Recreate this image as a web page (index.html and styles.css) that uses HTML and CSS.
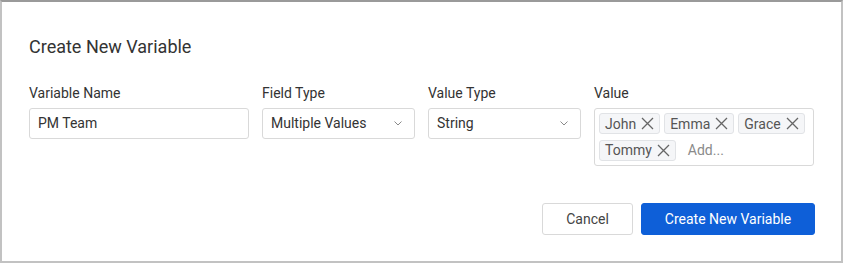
FILE: index.html
```html
<!DOCTYPE html>
<html lang="en">
<head>
    <meta charset="UTF-8">
    <meta name="viewport" content="width=device-width, initial-scale=1.0">
    <title>Create New Variable</title>
    <link rel="stylesheet" href="styles.css">
</head>
<body>
    <div class="dialog">
        <h2 class="dialog-title">Create New Variable</h2>

        <div class="fields">
            <!-- Variable name -->
            <div class="field field-wide">
                <label class="field-label">Variable Name</label>
                <div class="input">PM Team</div>
            </div>

            <!-- Field type -->
            <div class="field field-narrow">
                <label class="field-label">Field Type</label>
                <div class="input select">
                    <span>Multiple Values</span>
                    <svg class="chevron" width="8" height="5" viewBox="0 0 8 5"><path d="M0.5 0.5 L4 4 L7.5 0.5" fill="none" stroke="#8a8a8a" stroke-width="1"/></svg>
                </div>
            </div>

            <!-- Value type -->
            <div class="field field-narrow">
                <label class="field-label">Value Type</label>
                <div class="input select">
                    <span>String</span>
                    <svg class="chevron" width="8" height="5" viewBox="0 0 8 5"><path d="M0.5 0.5 L4 4 L7.5 0.5" fill="none" stroke="#8a8a8a" stroke-width="1"/></svg>
                </div>
            </div>

            <!-- Values as tags -->
            <div class="field field-wide">
                <label class="field-label">Value</label>
                <div class="tag-box">
                    <span class="tag">John<svg class="tag-x" width="13" height="13" viewBox="0 0 13 13"><path d="M1 1 L12 12 M12 1 L1 12" stroke="#666" stroke-width="1.3"/></svg></span>
                    <span class="tag">Emma<svg class="tag-x" width="13" height="13" viewBox="0 0 13 13"><path d="M1 1 L12 12 M12 1 L1 12" stroke="#666" stroke-width="1.3"/></svg></span>
                    <span class="tag">Grace<svg class="tag-x" width="13" height="13" viewBox="0 0 13 13"><path d="M1 1 L12 12 M12 1 L1 12" stroke="#666" stroke-width="1.3"/></svg></span>
                    <span class="tag">Tommy<svg class="tag-x" width="13" height="13" viewBox="0 0 13 13"><path d="M1 1 L12 12 M12 1 L1 12" stroke="#666" stroke-width="1.3"/></svg></span>
                    <span class="tag-add">Add...</span>
                </div>
            </div>
        </div>

        <div class="actions">
            <button class="btn btn-cancel">Cancel</button>
            <button class="btn btn-primary">Create New Variable</button>
        </div>
    </div>
</body>
</html>
```

FILE: styles.css
```css
* {
    box-sizing: border-box;
}
html, body {
    margin: 0;
    padding: 0;
}
body {
    font-family: Roboto, "Liberation Sans", Arial, sans-serif;
    color: #333;
    background-color: #fff;
}
.dialog {
    width: 843px;
    height: 263px;
    border: 2px solid #c2c2c2;
    border-top: 2px solid #9a9a9a;
    padding: 0 27px 0 27px;
}
.dialog-title {
    margin: 0;
    padding-top: 33px;
    font-size: 18px;
    font-weight: 400;
    line-height: 24px;
    color: #333;
}
.fields {
    display: flex;
    gap: 13px;
    margin-top: 26px;
}
.field {
    display: flex;
    flex-direction: column;
}
.field-wide {
    width: 220px;
}
.field-narrow {
    width: 153px;
}
.field-label {
    font-size: 14px;
    line-height: 16px;
    color: #333;
    margin-bottom: 7px;
}
.input {
    height: 31px;
    border: 1px solid #d9d9d9;
    border-radius: 3px;
    padding: 0 8px;
    font-size: 14px;
    line-height: 29px;
    color: #333;
}
.select {
    display: flex;
    justify-content: space-between;
    align-items: center;
    padding-right: 12px;
}
.chevron {
    display: block;
}
.tag-box {
    border: 1px solid #d9d9d9;
    border-radius: 3px;
    padding: 4px;
    display: flex;
    flex-wrap: wrap;
    gap: 5px 4px;
    height: 58px;
}
.tag {
    display: inline-flex;
    align-items: center;
    gap: 5px;
    height: 21px;
    padding: 0 5px 0 5px;
    background-color: #f5f6f8;
    border: 1px solid #e1e3e6;
    border-radius: 3px;
    font-size: 14px;
    color: #555;
}
.tag-x {
    display: block;
}
.tag-add {
    display: inline-flex;
    align-items: center;
    height: 21px;
    padding-left: 8px;
    font-size: 14px;
    color: #8a8a8a;
}
.actions {
    display: flex;
    justify-content: flex-end;
    gap: 8px;
    margin-top: 37px;
    margin-right: -1px;
}
.btn {
    height: 32px;
    border-radius: 3px;
    font-family: Roboto, "Liberation Sans", Arial, sans-serif;
    font-size: 14px;
    cursor: pointer;
}
.btn-cancel {
    width: 91px;
    background-color: #fff;
    border: 1px solid #d9d9d9;
    color: #444;
}
.btn-primary {
    width: 174px;
    background-color: #0e5fd8;
    border: 1px solid #0e5fd8;
    color: #fff;
}
```
